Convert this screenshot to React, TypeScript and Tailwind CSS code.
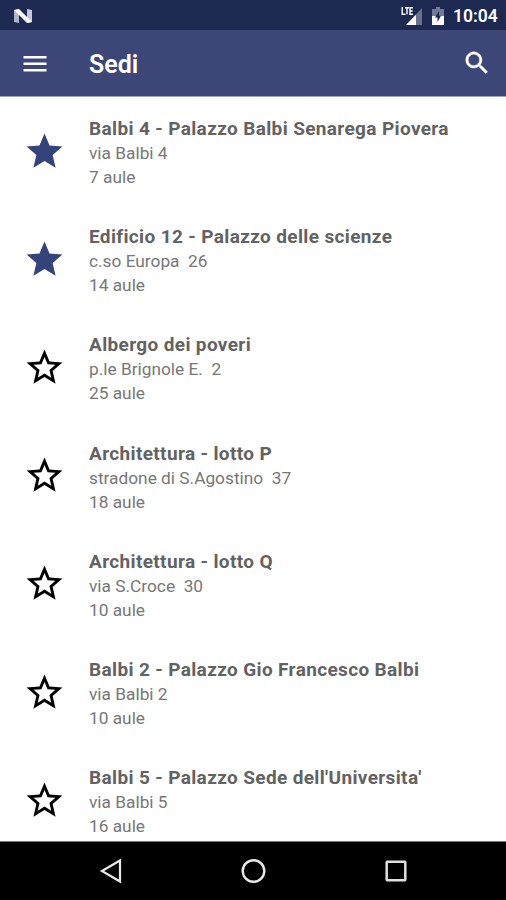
const places = [
  { name: "Balbi 4 - Palazzo Balbi Senarega Piovera", address: "via Balbi 4", rooms: "7 aule", starred: true },
  { name: "Edificio 12 - Palazzo delle scienze", address: "c.so Europa  26", rooms: "14 aule", starred: true },
  { name: "Albergo dei poveri", address: "p.le Brignole E.  2", rooms: "25 aule", starred: false },
  { name: "Architettura - lotto P", address: "stradone di S.Agostino  37", rooms: "18 aule", starred: false },
  { name: "Architettura - lotto Q", address: "via S.Croce  30", rooms: "10 aule", starred: false },
  { name: "Balbi 2 - Palazzo Gio Francesco Balbi", address: "via Balbi 2", rooms: "10 aule", starred: false },
  { name: "Balbi 5 - Palazzo Sede dell'Universita'", address: "via Balbi 5", rooms: "16 aule", starred: false },
];

function Star({ filled }: { filled: boolean }) {
  return (
    <svg viewBox="0 0 24 24" className={filled ? "size-[43px] fill-[#34447a]" : "mb-px size-[43px] fill-black"}>
      {filled ? (
        <path d="M12 17.27L18.18 21l-1.64-7.03L22 9.24l-7.19-.61L12 2 9.19 8.63 2 9.24l5.46 4.73L5.82 21z" />
      ) : (
        <path d="M22 9.24l-7.19-.62L12 2 9.19 8.63 2 9.24l5.46 4.73L5.82 21 12 17.27 18.18 21l-1.63-7.03L22 9.24zM12 15.4l-3.76 2.27 1-4.28-3.32-2.88 4.38-.38L12 6.1l1.71 4.04 4.38.38-3.32 2.88 1 4.28L12 15.4z" />
      )}
    </svg>
  );
}

function StatusBar() {
  return (
    <div className="flex h-[30px] shrink-0 items-center bg-[#1d2951] pl-[13px] pr-[9px] pt-px text-white">
      <svg viewBox="0 0 20 16" className="h-4 w-5">
        <path d="M1 2l5-1v14l-5-1z" fill="#aeb5c6" />
        <path d="M14 1l5 1v12l-5 1z" fill="#c3c8d4" />
        <path d="M1 2l5-1 13 13-5 1z" fill="#fff" />
      </svg>
      <svg viewBox="0 0 22 20" className="ml-auto h-5 w-[22px]">
        <path d="M21 2v17H5z" fill="#67708d" />
        <path d="M15 8.700V19H5z" fill="#fff" />
        <path d="M1.200 1v7.200h3.300M4 1.700h4M6 1.700v6.500M12 1.700H9v6.500h3M9 5h2.700" fill="none" stroke="#fff" strokeWidth="1.400" />
      </svg>
      <svg viewBox="0 0 12 18" className="ml-[9px] h-[18px] w-3">
        <path d="M4 0h4v2h4v7H0V2h4z" fill="#717a96" />
        <path d="M0 9h12v9H0z" fill="#fff" />
        <path d="M7 4L3 10.500h2.500V15L9 8.700H7z" fill="#1d2951" />
      </svg>
      <span className="ml-[9px] mt-[2px] w-[44px] whitespace-nowrap text-[17.500px] font-semibold leading-none">10:04</span>
    </div>
  );
}

export default function App() {
  return (
    <div className="flex h-[900px] w-[506px] flex-col overflow-hidden bg-white font-[Roboto,sans-serif]">
      <StatusBar />
      <header className="flex h-[66px] shrink-0 items-center bg-[#3c4777] pl-[23px] pr-[14px] text-white">
        <svg viewBox="0 0 24 16" className="mt-px h-4 w-6 fill-white">
          <path d="M0.500 0h23v2.500h-23zM0.500 6.500h23V9h-23zM0.500 13h23v2.500h-23z" />
        </svg>
        <h1 className="ml-[42px] mt-[2px] text-[25px] font-semibold leading-none">Sedi</h1>
        <svg viewBox="0 0 24 24" className="ml-auto size-[30px] fill-white stroke-white" strokeWidth=".3">
          <path d="M15.500 14h-.79l-.28-.27C15.410 12.590 16 11.110 16 9.500 16 5.910 13.090 3 9.500 3S3 5.910 3 9.500 5.910 16 9.500 16c1.610 0 3.090-.59 4.230-1.570l.27.28v.79l5 4.990L20.490 19l-4.990-5zm-6 0C7.010 14 5 11.990 5 9.500S7.010 5 9.500 5 14 7.010 14 9.500 11.990 14 9.500 14z" />
        </svg>
      </header>
      <main className="min-h-0 flex-1 overflow-hidden border-t border-[#9ca2b9]">
        {places.map((p) => (
          <div key={p.name} className="flex h-[108.300px] items-center pl-[23px]">
            <Star filled={p.starred} />
            <div className="ml-[23px] mt-[2px] whitespace-pre text-[17.300px] leading-6 text-[#777]">
              <div className="h-[25px] text-[19px] font-bold leading-[25px] tracking-[0.360px] text-[#626262]">{p.name}</div>
              <div>{p.address}</div>
              <div>{p.rooms}</div>
            </div>
          </div>
        ))}
      </main>
      <nav className="flex h-[59px] shrink-0 items-center justify-between border-t border-[#777] bg-black pl-[99px] pr-[99px]">
        <svg viewBox="0 0 24 26" className="h-[26px] w-6 fill-none stroke-[#e8e8e8]" strokeWidth="2.2">
          <path d="M3 13L21 2.500v21z" />
        </svg>
        <svg viewBox="0 0 26 26" className="size-[26px] fill-none stroke-[#e8e8e8]" strokeWidth="2.4">
          <circle cx="12.500" cy="13" r="10.800" />
        </svg>
        <svg viewBox="0 0 22 22" className="size-[22px] fill-none stroke-[#e0e0e0]" strokeWidth="2.5">
          <rect x="1.700" y="1.700" width="18.600" height="18.600" rx=".5" />
        </svg>
      </nav>
    </div>
  );
}
